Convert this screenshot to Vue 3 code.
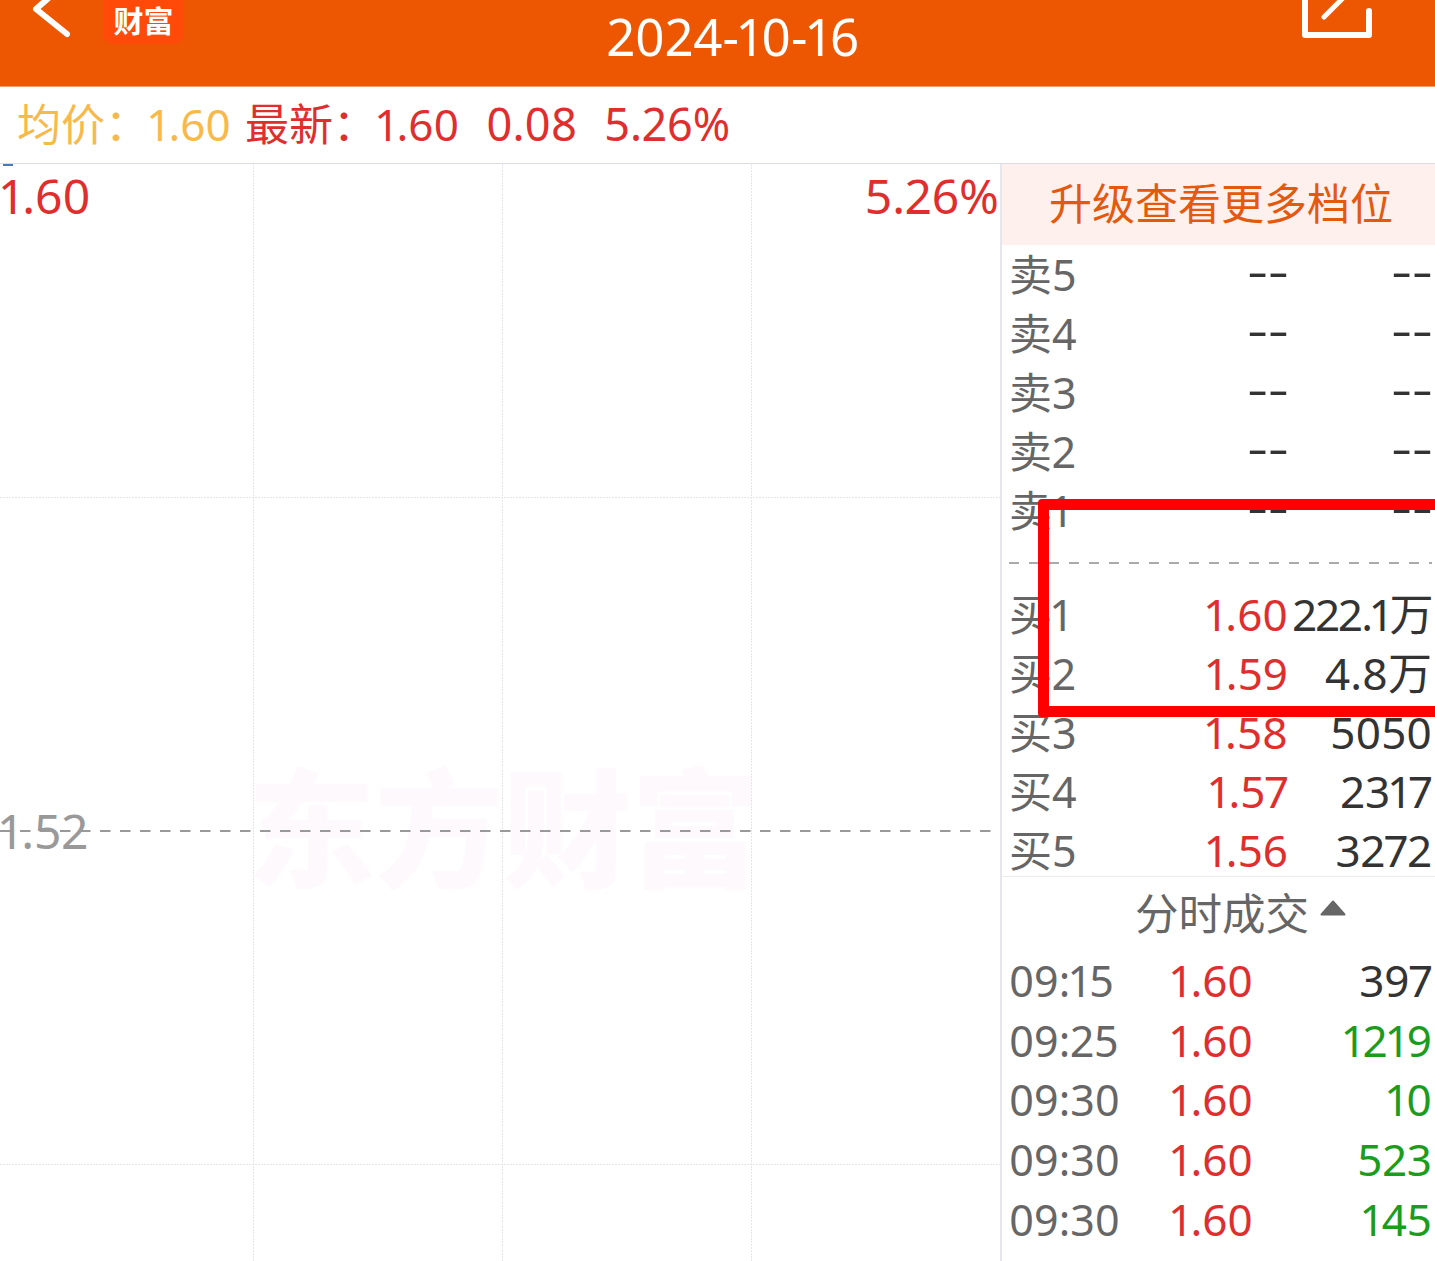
<script setup>
const sells = [
  { label: '卖5', price: '--', vol: '--' },
  { label: '卖4', price: '--', vol: '--' },
  { label: '卖3', price: '--', vol: '--' },
  { label: '卖2', price: '--', vol: '--' },
  { label: '卖1', price: '--', vol: '--' },
]
const buys = [
  { label: '买1', price: '1.60', vol: '222.1万', tight: true },
  { label: '买2', price: '1.59', vol: '4.8万' },
  { label: '买3', price: '1.58', vol: '5050' },
  { label: '买4', price: '1.57', vol: '2317' },
  { label: '买5', price: '1.56', vol: '3272' },
]
const trades = [
  { time: '09:15', price: '1.60', vol: '397', cls: 'dark' },
  { time: '09:25', price: '1.60', vol: '1219', cls: 'green' },
  { time: '09:30', price: '1.60', vol: '10', cls: 'green' },
  { time: '09:30', price: '1.60', vol: '523', cls: 'green' },
  { time: '09:30', price: '1.60', vol: '145', cls: 'green' },
]
</script>

<template>
  <div class="page">
    <header class="topbar">
      <svg class="back" width="60" height="50" viewBox="0 0 60 50">
        <polyline points="25,-5 9,9 40,34" fill="none" stroke="#fff" stroke-width="6" stroke-linecap="round" stroke-linejoin="round" />
      </svg>
      <div class="badge">财富</div>
      <h1 class="date">2024-10-16</h1>
      <svg class="share" width="80" height="50" viewBox="0 0 80 50">
        <path d="M5 -8 V35 H69 V11" fill="none" stroke="#fff" stroke-width="6" stroke-linecap="round" stroke-linejoin="round" />
        <path d="M24 17 L46 -5" fill="none" stroke="#fff" stroke-width="5" stroke-linecap="round" />
      </svg>
    </header>

    <div class="summary">
      <span class="yellow">均价：1.60</span>
      <span class="red latest">最新：1.60</span>
      <span class="red change">0.08</span>
      <span class="red pct">5.26%</span>
    </div>

    <main class="content">
      <section class="chart">
        <svg class="grid" width="1000" height="1097" viewBox="0 0 1000 1097">
          <g stroke="#e6e6e6" stroke-width="1" stroke-dasharray="2 1">
            <line x1="253.5" y1="0" x2="253.5" y2="1097" />
            <line x1="502.5" y1="0" x2="502.5" y2="1097" />
            <line x1="751.5" y1="0" x2="751.5" y2="1097" />
            <line x1="0" y1="333.5" x2="1000" y2="333.5" />
            <line x1="0" y1="1000.5" x2="1000" y2="1000.5" />
          </g>
          <rect x="3" y="0" width="10" height="2" fill="#4a7ab5" />
        </svg>
        <div class="watermark">东方财富</div>
        <span class="price-top red">1.60</span>
        <span class="pct-top red">5.26%</span>
        <span class="price-mid">1.52</span>
        <svg class="midline" width="1000" height="2" viewBox="0 0 1000 2">
          <line x1="0" y1="1" x2="994" y2="1" stroke="#999" stroke-width="2" stroke-dasharray="10.5 9.5" />
        </svg>
      </section>

      <aside class="side">
        <div class="upgrade">升级查看更多档位</div>
        <div class="book">
          <div v-for="row in sells" :key="row.label" class="row">
            <span class="label">{{ row.label }}</span>
            <span class="price"><span class="dash">{{ row.price }}</span></span>
            <span class="vol"><span class="dash">{{ row.vol }}</span></span>
          </div>
          <div class="divider"></div>
          <div v-for="row in buys" :key="row.label" class="row">
            <span class="label">{{ row.label }}</span>
            <span class="price red">{{ row.price }}</span>
            <span class="vol dark" :class="{ tight: row.tight }">{{ row.vol }}</span>
          </div>
        </div>
        <div class="tape-head">
          <span>分时成交</span>
          <svg width="26" height="16" viewBox="0 0 26 16"><path d="M13 1.5 L24.5 14.5 H1.5 Z" fill="#666" stroke="#666" stroke-width="2" stroke-linejoin="round" /></svg>
        </div>
        <div class="tape">
          <div v-for="(t, i) in trades" :key="i" class="trade">
            <span class="label">{{ t.time }}</span>
            <span class="trade-price red">{{ t.price }}</span>
            <span class="vol" :class="t.cls">{{ t.vol }}</span>
          </div>
        </div>
      </aside>
    </main>

    <div class="highlight"></div>
  </div>
</template>

<style>
html, body { margin: 0; padding: 0; background: #fff; overflow: hidden; }
</style>

<style scoped>
.page {
  position: relative;
  width: 1435px;
  height: 1261px;
  overflow: hidden;
  background: #fff;
  font-family: "Noto Sans", "Noto Sans CJK SC", sans-serif;
  font-variant-numeric: proportional-nums;
}
.topbar {
  position: relative;
  height: 86px;
  background: #ed5702;
  border-bottom: 1px solid #e9a06e;
  display: flex;
  align-items: flex-start;
  justify-content: center;
  padding-left: 31px;
}
.back { position: absolute; left: 27px; top: 0; }
.badge {
  position: absolute;
  left: 103px;
  top: -10px;
  width: 81px;
  height: 54px;
  background: #ff4a0a;
  border-radius: 10px;
  color: #fff;
  font-weight: 700;
  font-size: 30px;
  line-height: 62px;
  text-align: center;
}
.date {
  margin: 0;
  color: #fff;
  font-weight: 400;
  font-size: 51px;
  line-height: 73px;
}
.share { position: absolute; left: 1300px; top: 0; }
.summary {
  height: 76px;
  display: flex;
  align-items: baseline;
  padding-left: 17px;
  font-size: 44px;
  line-height: 73px;
  white-space: nowrap;
}
.latest { margin-left: 14px; }
.change { margin-left: 27px; font-size: 45px; }
.pct { margin-left: 27px; font-size: 45px; }
.yellow { color: #f8b94c; }
.red { color: #e02e2e; }
.dark { color: #333; }
.green { color: #1c9c1c; }
.content {
  display: flex;
  height: 1098px;
  border-top: 1px solid #dcdce4;
}
.chart {
  position: relative;
  flex: 0 0 1000px;
  overflow: hidden;
}
.grid { position: absolute; left: 0; top: 0; }
.watermark {
  position: absolute;
  left: 247px;
  top: 590px;
  color: #fef9fc;
  font-weight: 900;
  font-size: 128px;
  line-height: 150px;
  white-space: nowrap;
}
.price-top, .pct-top, .price-mid {
  position: absolute;
  font-size: 48px;
  line-height: 60px;
}
.price-top { left: 1px; top: 2px; }
.pct-top { right: 1px; top: 2px; }
.price-mid { left: 0; top: 637px; color: #999; }
.midline { position: absolute; left: 0; top: 666px; }
.side {
  flex: 1;
  min-width: 0;
  border-left: 2px solid #e6e6ee;
  overflow: hidden;
}
.upgrade {
  height: 81px;
  background: #fef1ed;
  color: #e4590e;
  font-size: 43px;
  line-height: 79px;
  text-align: center;
  padding-left: 5px;
}
.book {
  height: 632px;
  border-bottom: 1px solid #ececec;
  box-sizing: border-box;
  padding: 0 3px 0 7px;
}
.row {
  display: grid;
  grid-template-columns: 1fr 111px 144px;
  align-items: baseline;
  height: 59px;
  line-height: 59px;
  font-size: 44px;
}
.label { color: #666; font-size: 43px; }
.price, .vol { text-align: right; white-space: nowrap; }
.dash {
  display: inline-block;
  color: #333;
  font-size: 43px;
  transform: translate(1px, -4px) scaleX(1.5);
  transform-origin: right center;
}
.tight { letter-spacing: -1.5px; }
.divider {
  height: 45px;
  background: linear-gradient(90deg, #aaa 0 10px, transparent 10px 20px) 0 22px / 20px 2px repeat-x;
}
.tape-head {
  height: 72px;
  display: flex;
  align-items: center;
  justify-content: center;
  gap: 11px;
  padding-left: 44px;
  padding-bottom: 4px;
  box-sizing: border-box;
  color: #666;
  font-size: 43.5px;
}
.tape-head svg { margin-top: -6px; }
.tape { padding: 2px 3px 0 7px; }
.trade {
  display: grid;
  grid-template-columns: 162px 83px 1fr;
  align-items: baseline;
  height: 59.7px;
  line-height: 59.7px;
  font-size: 44px;
}
.trade-price { white-space: nowrap; }
.highlight {
  position: absolute;
  left: 1038px;
  top: 499px;
  width: 420px;
  height: 218px;
  border: 11px solid #ff0000;
  border-radius: 4px;
  box-sizing: border-box;
}
</style>
